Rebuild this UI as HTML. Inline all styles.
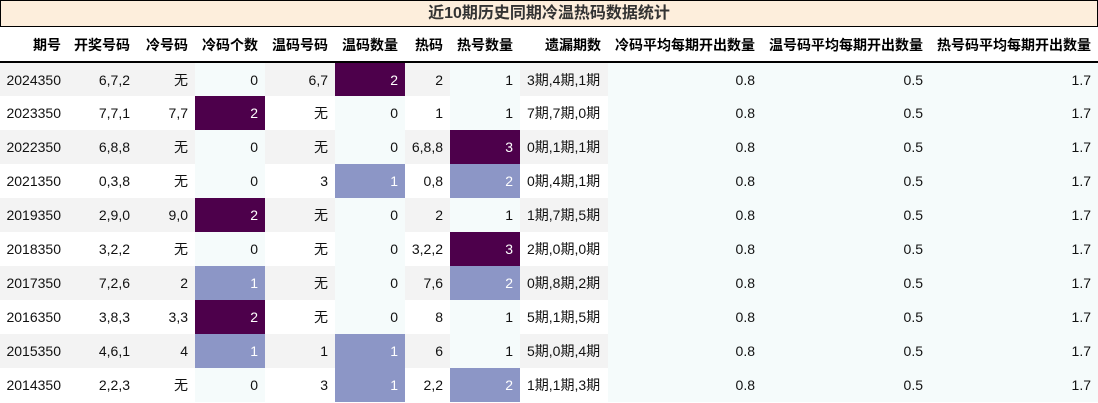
<!DOCTYPE html>
<html><head><meta charset="utf-8"><style>
*{margin:0;padding:0;box-sizing:border-box}
body{width:1098px;height:403px;background:#fff;font-family:"Liberation Sans","Noto Sans CJK SC",sans-serif;font-size:14px;color:#111;overflow:hidden;position:relative}
.title{position:absolute;left:0;top:0;width:1098px;height:27px;background:#fdeedc;border:1px solid #000;text-align:center;font-weight:bold;font-size:16px;line-height:25px;color:#333}
table{position:absolute;left:0;top:28px;border-collapse:collapse;table-layout:fixed}
th{height:34px;font-weight:bold;text-align:right;padding-right:7px;border-bottom:2px solid #000;color:#000}
td{height:34px;text-align:right;padding-right:7px;white-space:nowrap}
tr.o td.s{background:#f3f3f3}
tr.e td.s{background:#fff}
td.c{background:#f5fbfb}
td.d{background:#4d004b;color:#fff}
td.l{background:#8c96c6;color:#fff}
td.m{text-align:left;padding-left:7px;padding-right:0}
</style></head><body>
<div class="title">近10期历史同期冷温热码数据统计</div>
<table>
<colgroup><col style="width:68px"><col style="width:69px"><col style="width:58px"><col style="width:70px"><col style="width:70px"><col style="width:70px"><col style="width:45px"><col style="width:70px"><col style="width:88px"><col style="width:154px"><col style="width:168px"><col style="width:168px"></colgroup>
<tr><th>期号</th><th>开奖号码</th><th>冷号码</th><th>冷码个数</th><th>温码号码</th><th>温码数量</th><th>热码</th><th>热号数量</th><th>遗漏期数</th><th>冷码平均每期开出数量</th><th>温号码平均每期开出数量</th><th>热号码平均每期开出数量</th></tr>
<tr class="o"><td class="s">2024350</td><td class="s">6,7,2</td><td class="s">无</td><td class="c">0</td><td class="s">6,7</td><td class="d">2</td><td class="s">2</td><td class="c">1</td><td class="s m">3期,4期,1期</td><td class="c">0.8</td><td class="c">0.5</td><td class="c">1.7</td></tr>
<tr class="e"><td class="s">2023350</td><td class="s">7,7,1</td><td class="s">7,7</td><td class="d">2</td><td class="s">无</td><td class="c">0</td><td class="s">1</td><td class="c">1</td><td class="s m">7期,7期,0期</td><td class="c">0.8</td><td class="c">0.5</td><td class="c">1.7</td></tr>
<tr class="o"><td class="s">2022350</td><td class="s">6,8,8</td><td class="s">无</td><td class="c">0</td><td class="s">无</td><td class="c">0</td><td class="s">6,8,8</td><td class="d">3</td><td class="s m">0期,1期,1期</td><td class="c">0.8</td><td class="c">0.5</td><td class="c">1.7</td></tr>
<tr class="e"><td class="s">2021350</td><td class="s">0,3,8</td><td class="s">无</td><td class="c">0</td><td class="s">3</td><td class="l">1</td><td class="s">0,8</td><td class="l">2</td><td class="s m">0期,4期,1期</td><td class="c">0.8</td><td class="c">0.5</td><td class="c">1.7</td></tr>
<tr class="o"><td class="s">2019350</td><td class="s">2,9,0</td><td class="s">9,0</td><td class="d">2</td><td class="s">无</td><td class="c">0</td><td class="s">2</td><td class="c">1</td><td class="s m">1期,7期,5期</td><td class="c">0.8</td><td class="c">0.5</td><td class="c">1.7</td></tr>
<tr class="e"><td class="s">2018350</td><td class="s">3,2,2</td><td class="s">无</td><td class="c">0</td><td class="s">无</td><td class="c">0</td><td class="s">3,2,2</td><td class="d">3</td><td class="s m">2期,0期,0期</td><td class="c">0.8</td><td class="c">0.5</td><td class="c">1.7</td></tr>
<tr class="o"><td class="s">2017350</td><td class="s">7,2,6</td><td class="s">2</td><td class="l">1</td><td class="s">无</td><td class="c">0</td><td class="s">7,6</td><td class="l">2</td><td class="s m">0期,8期,2期</td><td class="c">0.8</td><td class="c">0.5</td><td class="c">1.7</td></tr>
<tr class="e"><td class="s">2016350</td><td class="s">3,8,3</td><td class="s">3,3</td><td class="d">2</td><td class="s">无</td><td class="c">0</td><td class="s">8</td><td class="c">1</td><td class="s m">5期,1期,5期</td><td class="c">0.8</td><td class="c">0.5</td><td class="c">1.7</td></tr>
<tr class="o"><td class="s">2015350</td><td class="s">4,6,1</td><td class="s">4</td><td class="l">1</td><td class="s">1</td><td class="l">1</td><td class="s">6</td><td class="c">1</td><td class="s m">5期,0期,4期</td><td class="c">0.8</td><td class="c">0.5</td><td class="c">1.7</td></tr>
<tr class="e"><td class="s">2014350</td><td class="s">2,2,3</td><td class="s">无</td><td class="c">0</td><td class="s">3</td><td class="l">1</td><td class="s">2,2</td><td class="l">2</td><td class="s m">1期,1期,3期</td><td class="c">0.8</td><td class="c">0.5</td><td class="c">1.7</td></tr>
</table>
</body></html>
